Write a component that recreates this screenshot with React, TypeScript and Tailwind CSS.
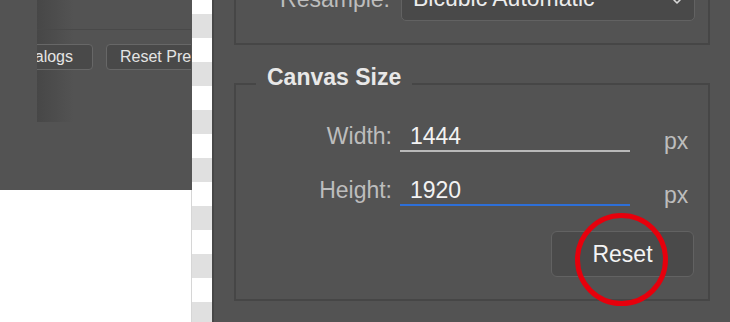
import React from 'react';

const checkerRows = Array.from({ length: 14 }, (_, i) => i);

const App: React.FC = () => {
  return (
    <div className="flex w-[730px] h-[322px] overflow-hidden bg-white font-['Liberation_Sans',Arial,sans-serif]">
      {/* left: preferences dialog behind */}
      <div className="w-[191px] shrink-0 flex flex-col">
        <div className="h-[190px] flex bg-[#535353]">
          <div className="w-[37px] shrink-0 bg-[#535353]" />
          <div className="relative flex-1 overflow-hidden">
            <div className="absolute left-0 top-0 w-[37px] h-[122px] bg-[linear-gradient(to_right,#474747,#535353)]" />
            <div className="relative h-[30px] border-b border-[#494949]" />
            <div className="relative mt-[14px] flex items-center">
              <div className="w-[56px] shrink-0 flex justify-end">
                <button className="shrink-0 h-[26px] pl-[13px] pr-[19px] rounded-[4px] border border-[#676767] bg-[#494949] text-[16px] text-[#e4e4e4] whitespace-nowrap">
                  Reset All Warning Dialogs
                </button>
              </div>
              <button className="shrink-0 ml-[13px] h-[26px] px-[13px] rounded-[4px] border border-[#676767] bg-[#494949] text-[16px] text-[#e4e4e4] whitespace-nowrap">
                Reset Preferences On Quit
              </button>
            </div>
          </div>
        </div>
      </div>

      {/* transparency checker strip */}
      <div className="w-[1px] shrink-0 flex flex-col">
        <div className="h-[190px] bg-[#535353]" />
        <div className="flex-1 bg-[#d6d6d6]" />
      </div>
      <div className="w-[20px] shrink-0 flex flex-col">
        <div className="h-[14px] shrink-0 bg-white" />
        {checkerRows.map(i => (
          <div key={i} className={i % 2 === 0 ? 'h-[24px] shrink-0 bg-[#e0e0e0]' : 'h-[24px] shrink-0 bg-white'} />
        ))}
      </div>

      {/* right: image size dialog */}
      <div className="flex-1 flex flex-col bg-[#535353] border-l-2 border-[#474747] pl-[20px] pr-[20px] text-[23px]">
        <div className="-mt-[40px] h-[85px] shrink-0 border-2 border-[#464646] flex items-end pb-[22px]">
          <span className="w-[154px] text-right leading-[26px] text-[#bdbdbd] self-center mt-[14px]">Resample:</span>
          <div className="ml-[11px] w-[294px] h-[46px] rounded-[5px] border border-[#626262] bg-[#494949] flex items-center pl-[11px] pr-[12px]">
            <span className="flex-1 leading-[26px] text-[#ececec]">Bicubic Automatic</span>
            <svg width="10" height="14" viewBox="0 0 10 14" fill="none" stroke="#d8d8d8" strokeWidth="1.6" strokeLinecap="round" strokeLinejoin="round">
              <path d="M2 5 L5 2 L8 5" />
              <path d="M2 9 L5 12 L8 9" />
            </svg>
          </div>
        </div>

        <fieldset className="mt-[19px] h-[237px] shrink-0 border-2 border-[#464646]">
          <legend className="ml-[20px] px-[11px] pb-[13px] leading-[26px] font-bold text-[#e8e8e8]">Canvas Size</legend>
          <div className="flex flex-col pt-[20px]">
            <div className="h-[29px] flex items-start">
              <span className="w-[156px] text-right leading-[26px] text-[#bdbdbd]">Width:</span>
              <div className="ml-[8px] w-[230px] h-[29px] border-b-2 border-[#b9b9b9] pl-[10px] leading-[26px] text-[#f2f2f2]">1444</div>
              <span className="ml-[34px] pt-[5px] leading-[26px] text-[#bdbdbd]">px</span>
            </div>
            <div className="mt-[25px] h-[29px] flex items-start">
              <span className="w-[156px] text-right leading-[26px] text-[#bdbdbd]">Height:</span>
              <div className="ml-[8px] w-[230px] h-[29px] border-b-2 border-[#2d6fd8] pl-[10px] leading-[26px] text-[#f2f2f2]">1920</div>
              <span className="ml-[34px] pt-[5px] leading-[26px] text-[#bdbdbd]">px</span>
            </div>
            <div className="mt-[25px] self-end mr-[14px] relative">
              <button className="w-[143px] h-[46px] rounded-[6px] border border-[#626262] bg-[#4a4a4a] text-[#f4f4f4] leading-[26px]">
                Reset
              </button>
              <div className="absolute left-[24px] -top-[18px] w-[93px] h-[93px] rounded-full border-[5px] border-[#e6000c] pointer-events-none" />
            </div>
          </div>
        </fieldset>
      </div>
    </div>
  );
};

export default App;
